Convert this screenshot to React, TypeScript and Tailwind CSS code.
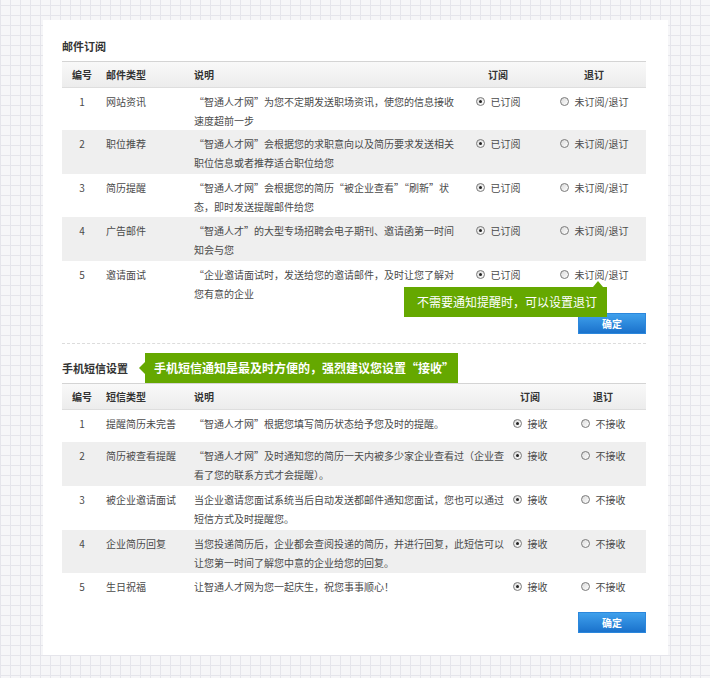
import React from 'react';

type Row = { n: number; t: string; d: string[]; h: string };

const mailRows: Row[] = [
  { n: 1, t: '网站资讯', d: ['“智通人才网”为您不定期发送职场资讯，使您的信息接收', '速度超前一步'], h: 'h-[42px]' },
  { n: 2, t: '职位推荐', d: ['“智通人才网”会根据您的求职意向以及简历要求发送相关', '职位信息或者推荐适合职位给您'], h: 'h-[44px]' },
  { n: 3, t: '简历提醒', d: ['“智通人才网”会根据您的简历“被企业查看”“刷新”状', '态，即时发送提醒邮件给您'], h: 'h-[43px]' },
  { n: 4, t: '广告邮件', d: ['“智通人才”的大型专场招聘会电子期刊、邀请函第一时间', '知会与您'], h: 'h-[44px]' },
  { n: 5, t: '邀请面试', d: ['“企业邀请面试时，发送给您的邀请邮件，及时让您了解对', '您有意的企业'], h: 'h-[44px]' },
];

const smsRows: Row[] = [
  { n: 1, t: '提醒简历未完善', d: ['“智通人才网”根据您填写简历状态给予您及时的提醒。'], h: 'h-[32px]' },
  { n: 2, t: '简历被查看提醒', d: ['“智通人才网”及时通知您的简历一天内被多少家企业查看过（企业查', '看了您的联系方式才会提醒）。'], h: 'h-[44px]' },
  { n: 3, t: '被企业邀请面试', d: ['当企业邀请您面试系统当后自动发送都邮件通知您面试，您也可以通过', '短信方式及时提醒您。'], h: 'h-[44px]' },
  { n: 4, t: '企业简历回复', d: ['当您投递简历后，企业都会查阅投递的简历，并进行回复，此短信可以', '让您第一时间了解您中意的企业给您的回复。'], h: 'h-[43px]' },
  { n: 5, t: '生日祝福', d: ['让智通人才网为您一起庆生，祝您事事顺心！'], h: 'h-[32px]' },
];

function Radio({ checked, label }: { checked?: boolean; label: string }) {
  return (
    <span className="flex h-[19px] items-center justify-center gap-[6px]">
      <span className="w-[9px] h-[9px] rounded-full border border-[#7a7a7a] bg-gradient-to-br from-[#dadada] to-white flex items-center justify-center">
        {checked && <span className="w-[3px] h-[3px] rounded-full bg-[#222]" />}
      </span>
      <span className="leading-[19px]">{label}</span>
    </span>
  );
}

function Table({
  rows,
  typeHead,
  yes,
  no,
  descW,
  subW,
  lastPad,
}: {
  rows: Row[];
  typeHead: string;
  yes: string;
  no: string;
  descW: string;
  subW: string;
  lastPad: string;
}) {
  return (
    <div className="border-t border-[#d4d4d4]">
      <div className="flex h-[26px] items-center border-b border-[#dedede] bg-gradient-to-b from-[#f9f9f9] to-[#ececec] font-bold text-[#333]">
        <div className="w-[40px] text-center">编号</div>
        <div className="w-[92px] pl-[4px]">{typeHead}</div>
        <div className={descW}>说明</div>
        <div className={`${subW} text-center`}>订阅</div>
        <div className={`flex-1 text-center ${lastPad}`}>退订</div>
      </div>
      {rows.map((r, i) => (
        <div key={r.n} className={`flex items-start pt-[4px] ${r.h} ${i % 2 === 1 ? 'bg-[#efefef]' : ''}`}>
          <div className="w-[40px] text-center">{r.n}</div>
          <div className="w-[92px] pl-[4px]">{r.t}</div>
          <div className={`${descW} whitespace-nowrap`}>
            {r.d.map((line, k) => (
              <div key={k}>{line}</div>
            ))}
          </div>
          <div className={subW}>
            <Radio checked label={yes} />
          </div>
          <div className={`flex-1 ${lastPad}`}>
            <Radio label={no} />
          </div>
        </div>
      ))}
    </div>
  );
}

function OkButton() {
  return (
    <div className="flex justify-end">
      <button className="w-[68px] h-[21px] border border-[#2b87dc] bg-gradient-to-b from-[#3fa0ec] to-[#1a72cc] text-white font-bold text-[10px] leading-none">
        确定
      </button>
    </div>
  );
}

export default function App() {
  return (
    <div className="min-h-[678px] w-full bg-[#f6f6f8] bg-[linear-gradient(#e5e5eb_1px,transparent_1px),linear-gradient(90deg,#e5e5eb_1px,transparent_1px)] bg-[size:10px_10px] bg-[position:0_5px] pt-[20px] pl-[43px] font-['Noto_Sans_CJK_SC',sans-serif] text-[10px] leading-[19px] text-[#4a4a4a]">
      <div className="relative w-[625px] h-[635px] bg-white pl-[19px] pr-[22px] pt-[19px]">
        <h2 className="text-[11px] leading-[14px] font-bold text-[#333] mb-[8px]">邮件订阅</h2>
        <Table rows={mailRows} typeHead="邮件类型" yes="已订阅" no="未订阅/退订" descW="w-[266px]" subW="w-[76px]" lastPad="pl-[6px]" />
        <div className="mt-[8px]">
          <OkButton />
        </div>
        <div className="mt-[9px] border-t border-dashed border-[#dcdcdc]" />

        <div className="pt-[9px] flex items-center">
          <h2 className="text-[11px] leading-[14px] font-bold text-[#333]">手机短信设置</h2>
          <div className="relative ml-[17px] h-[30px] w-[313px] bg-[#65a800] pl-[9px] flex items-center text-white text-[12px] font-bold leading-none">
            <span className="absolute -left-[6px] top-1/2 -translate-y-1/2 border-y-[6px] border-r-[6px] border-y-transparent border-r-[#65a800]" />
            手机短信通知是最及时方便的，强烈建议您设置“接收”
          </div>
        </div>
        <Table rows={smsRows} typeHead="短信类型" yes="接收" no="不接收" descW="w-[300px]" subW="w-[72px]" lastPad="pr-[6px]" />
        <div className="mt-[7px]">
          <OkButton />
        </div>

        <div className="absolute left-[361px] top-[267px] h-[30px] w-[203px] bg-[#65a800] pl-[13px] flex items-center text-white text-[12px] leading-none">
          <span className="absolute -top-[6px] right-[4px] border-x-[5px] border-b-[6px] border-x-transparent border-b-[#65a800]" />
          不需要通知提醒时，可以设置退订
        </div>
      </div>
    </div>
  );
}
